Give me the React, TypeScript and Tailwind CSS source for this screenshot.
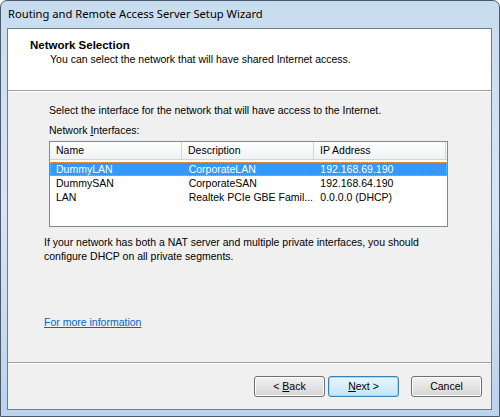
import React from "react";

const rows = [
  { name: "DummyLAN", desc: "CorporateLAN", ip: "192.168.69.190", selected: true },
  { name: "DummySAN", desc: "CorporateSAN", ip: "192.168.64.190", selected: false },
  { name: "LAN", desc: "Realtek PCIe GBE Famil...", ip: "0.0.0.0 (DHCP)", selected: false },
];

function Button({ children, primary }: { children: React.ReactNode; primary?: boolean }) {
  return (
    <button
      className={
        "h-[21px] w-[71px] rounded-[3px] border text-[10.5px] text-black " +
        (primary
          ? "border-[#3c7fb1] bg-gradient-to-b from-[#eaf6fd] to-[#bee6fd] shadow-[inset_0_0_0_1px_#a7d9f5]"
          : "border-[#707070] bg-gradient-to-b from-[#f2f2f2] to-[#d5d5d5] shadow-[inset_0_0_0_1px_#fcfcfc]")
      }
    >
      {children}
    </button>
  );
}

export default function App() {
  return (
    <div className="h-[417px] w-[500px] bg-white font-['Liberation_Sans',Arial,sans-serif]">
      {/* Window frame */}
      <div className="flex h-full w-full flex-col rounded-t-[7px] border border-[#4a5a6c] bg-gradient-to-b from-[#c8dcf0] via-[#d6e5f5] to-[#bcd3ec] pb-[6px] pl-[6px] pr-[7px]">
        {/* Title bar */}
        <div className="flex h-[27px] items-center pl-[1px] font-['Noto_Sans',sans-serif] text-[11.2px] text-black">
          Routing and Remote Access Server Setup Wizard
        </div>

        {/* Client area */}
        <div className="flex flex-1 flex-col border border-[#6d7d8f] bg-[#f0f0f0] text-[10.5px] text-black">
          {/* Header */}
          <div className="h-[62px] border-b border-[#a0a0a0] bg-white pl-[22px] pt-[9px] leading-[14px]">
            <div className="text-[11.5px] font-bold">Network Selection</div>
            <div className="pl-[20px]">You can select the network that will have shared Internet access.</div>
          </div>
          <div className="h-px bg-white" />

          {/* Body */}
          <div className="flex flex-1 flex-col pl-[41px] pt-[12px] leading-[13px]">
            <div>Select the interface for the network that will have access to the Internet.</div>
            <div className="mt-[7px]">
              Network <span className="underline">I</span>nterfaces:
            </div>

            {/* List view */}
            <div className="mt-[4px] h-[86px] w-[399px] border border-[#828790] bg-white">
              <div className="flex h-[18px] border-b border-[#d5d5d5] bg-gradient-to-b from-white to-[#f1f2f4]">
                <div className="flex w-[132px] items-center border-r border-[#d5d5d5] pl-[6px]">Name</div>
                <div className="flex w-[132px] items-center border-r border-[#d5d5d5] pl-[6px]">Description</div>
                <div className="flex w-[132px] items-center border-r border-[#d5d5d5] pl-[6px]">IP Address</div>
              </div>
              <div className="pt-[2px]">
                {rows.map((r) => (
                  <div
                    key={r.name}
                    className={
                      "flex h-[14px] items-center whitespace-nowrap " +
                      (r.selected ? "border border-dotted border-[#f0a050] bg-[#3399ff] text-white" : "border border-transparent")
                    }
                  >
                    <div className="w-[132px] pl-[5px]">{r.name}</div>
                    <div className="w-[132px] pl-[6px]">{r.desc}</div>
                    <div className="w-[132px] pl-[6px]">{r.ip}</div>
                  </div>
                ))}
              </div>
            </div>

            <div className="-ml-[5px] mt-[8px] leading-[14px]">
              If your network has both a NAT server and multiple private interfaces, you should
              <br />
              configure DHCP on all private segments.
            </div>

            <div className="flex-1" />
            <a className="-ml-[5px] mb-[33px] text-[#0066cc] underline">For more information</a>
          </div>

          {/* Separator + buttons */}
          <div className="h-px bg-[#a0a0a0]" />
          <div className="h-px bg-white" />
          <div className="flex h-[45px] items-center justify-end gap-[3px] pr-[9px]">
            <Button>
              &lt; <span className="underline">B</span>ack
            </Button>
            <Button primary>
              <span className="underline">N</span>ext &gt;
            </Button>
            <div className="w-[6px]" />
            <Button>Cancel</Button>
          </div>
        </div>
      </div>
    </div>
  );
}
